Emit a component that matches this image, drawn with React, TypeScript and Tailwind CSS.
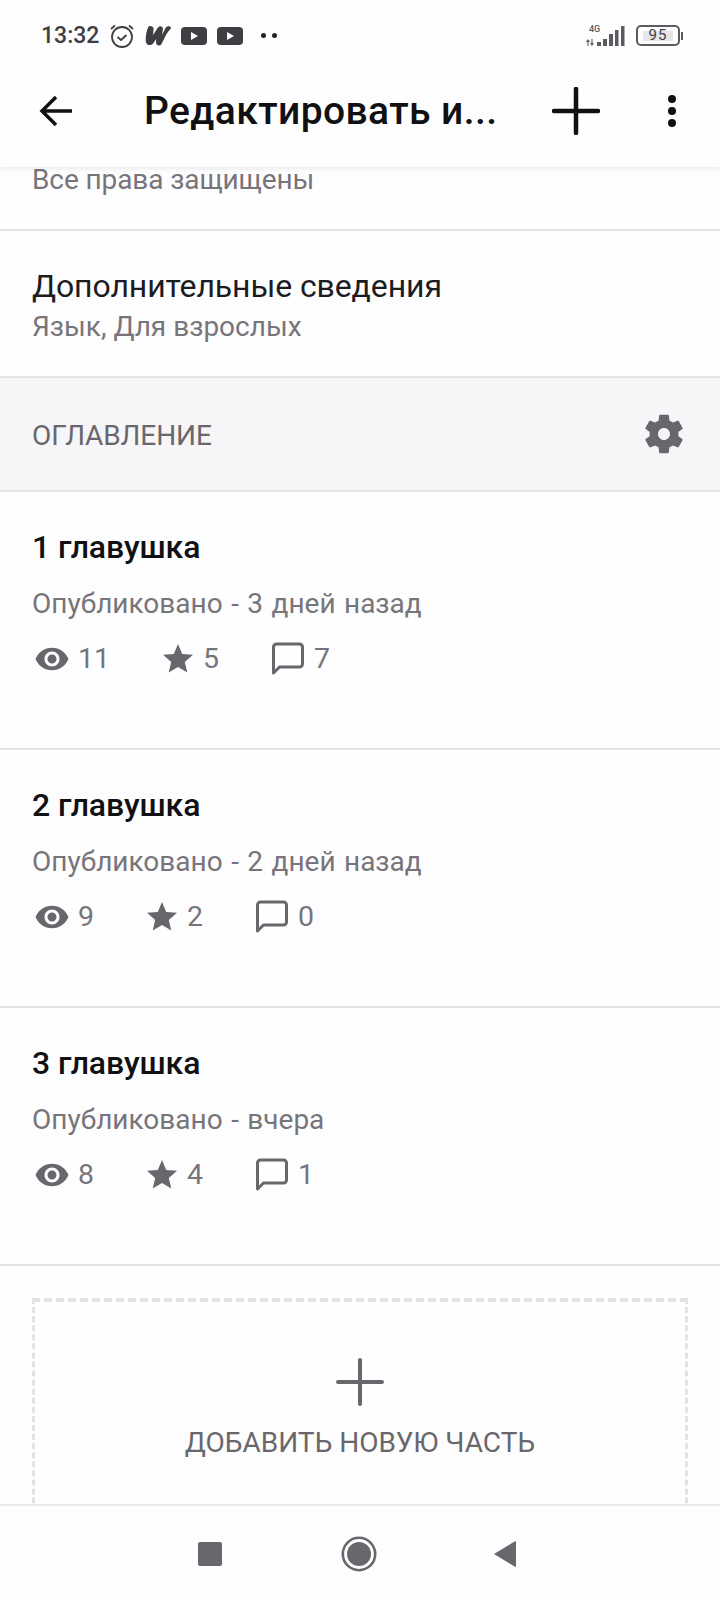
import React from "react";

const GRAY = "#69676b";

function Eye() {
  return (
    <svg width="36" height="36" viewBox="0 0 24 24" fill={GRAY} className="ml-[2px] shrink-0">
      <path d="M12 4.500C7 4.500 2.730 7.610 1 12c1.730 4.390 6 7.500 11 7.500s9.270-3.110 11-7.500c-1.730-4.390-6-7.500-11-7.500zM12 17c-2.760 0-5-2.240-5-5s2.240-5 5-5 5 2.240 5 5-2.240 5-5 5zm0-8c-1.660 0-3 1.340-3 3s1.340 3 3 3 3-1.340 3-3-1.340-3-3-3z" />
    </svg>
  );
}

function Star() {
  return (
    <svg width="36" height="36" viewBox="0 0 24 24" fill={GRAY} className="shrink-0">
      <path d="M12 17.270L18.180 21l-1.640-7.030L22 9.240l-7.190-.61L12 2 9.190 8.630 2 9.240l5.460 4.730L5.820 21z" />
    </svg>
  );
}

function Bubble() {
  return (
    <svg width="34" height="34" viewBox="0 0 34 34" fill="none" stroke={GRAY} strokeWidth="3" strokeLinejoin="round" className="shrink-0">
      <path d="M2.500 31V5a3 3 0 0 1 3-3h23a3 3 0 0 1 3 3v17a3 3 0 0 1-3 3H8.500z" />
    </svg>
  );
}

function Stat({ icon, value, className }: { icon: React.ReactNode; value: string; className: string }) {
  return (
    <div className={`flex items-center ${className}`}>
      {icon}
      <span className="text-[28.500px] leading-none text-[#77757a]">{value}</span>
    </div>
  );
}

function Chapter({ title, date, views, stars, comments, wide }: { title: string; date: string; views: string; stars: string; comments: string; wide?: boolean }) {
  return (
    <section className="h-[258px] border-b-2 border-[#e3e2e5] pl-[32px] pt-[37px]">
      <h3 className="text-[32px] leading-[36px] font-medium tracking-[-0.1px] text-[#111113]">{title}</h3>
      <p className="mt-[21px] text-[28px] leading-[36px] [word-spacing:1.500px] text-[#77757a]">{date}</p>
      <div className="mt-[19px] flex items-center">
        <Stat icon={<Eye />} value={views} className={wide ? "w-[128px] gap-[8px]" : "w-[112px] gap-[8px]"} />
        <Stat icon={<Star />} value={stars} className="w-[111px] gap-[7px]" />
        <Stat icon={<Bubble />} value={comments} className="w-[100px] gap-[9px]" />
      </div>
    </section>
  );
}

function StatusBar() {
  return (
    <div className="flex h-[67px] items-center pt-[4px] pl-[41px] pr-[37px] text-[#3f3e42]">
      <span className="text-[23px] font-medium leading-none">13:32</span>
      <svg width="26" height="26" viewBox="0 0 26 26" fill="none" stroke="#3f3e42" strokeWidth="1.800" className="ml-[10px]">
        <circle cx="13" cy="14" r="10" />
        <path d="M8.500 14l3.500 3 5.500-5M2 6l4-3.500M24 6l-4-3.500" />
      </svg>
      <svg width="26" height="20" viewBox="0 0 26 20" fill="#3f3e42" className="ml-[10px]">
        <path d="M5 0c3 0 4 2 3.500 4L8 9l5-7.500C14.500-.5 18 0 18 3l-1 6 3.500-7C21.500 0 24 0 25 .5c1.500 1 1 2.500-.5 3.500-3 3-5.500 9-8 14-1.500 2.500-5.500 2-5.500-1.500l.2-3.500-2.700 4C6.500 20 1.500 20 .8 15.500.3 12 1.500 5 3 1.500 3.500.5 4 0 5 0z" />
      </svg>
      {[0, 1].map((i) => (
        <svg key={i} width="26" height="18" viewBox="0 0 26 18" className={i === 0 ? "ml-[10px]" : "ml-[10px]"}>
          <rect width="26" height="18" rx="4" fill="#3f3e42" />
          <path d="M10 5l7 4-7 4z" fill="#fff" />
        </svg>
      ))}
      <span className="ml-[18px] h-[5px] w-[5px] rounded-full bg-[#222]" />
      <span className="ml-[6px] h-[5px] w-[5px] rounded-full bg-[#222]" />
      <div className="ml-auto flex items-center gap-[11px]">
        <svg width="39" height="23" viewBox="0 0 39 23" fill="#5c5b5f">
          <text x="3" y="8" fontSize="9" fontWeight="500" fontFamily="Roboto, sans-serif">4G</text>
          <path d="M2 22v-6M0.500 18l1.500-2 1.500 2M6 15v6M4.500 19l1.500 2 1.500-2" stroke="#5c5b5f" strokeWidth="1.100" fill="none" />
          <rect x="11" y="18" width="4" height="4" />
          <rect x="17" y="15" width="4" height="7" />
          <rect x="23" y="10" width="4" height="12" />
          <rect x="29" y="6" width="3.500" height="16" />
          <rect x="35" y="2" width="3.500" height="20" />
        </svg>
        <div className="flex items-center">
          <div className="flex h-[21px] w-[44px] items-center justify-center rounded-[5px] border-2 border-[#5c5b5f]">
            <span className="flex h-[10px] w-[30px] items-center justify-center bg-[#e6e5e8] text-[15px] leading-none tracking-[1px] text-[#3f3e42]">95</span>
          </div>
          <span className="ml-[1px] h-[8px] w-[2px] bg-[#5c5b5f]" />
        </div>
      </div>
    </div>
  );
}

function Toolbar() {
  return (
    <div className="flex h-[100px] items-center pb-[12px]">
      <svg width="34" height="32" viewBox="0 0 34 32" fill="none" stroke="#111113" strokeWidth="3.500" className="ml-[39px]">
        <path d="M33 16H3M17 2L3 16l14 14" />
      </svg>
      <h1 className="ml-[71px] w-[356px] text-[39px] font-medium leading-none tracking-[0.4px] whitespace-nowrap text-[#111113]">Редактировать и...</h1>
      <svg width="48" height="48" viewBox="0 0 48 48" stroke="#111113" strokeWidth="4.500" strokeLinecap="round" className="ml-[52px]">
        <path d="M24 2v44M2 24h44" />
      </svg>
      <div className="ml-[68px] flex flex-col gap-[4px]">
        <span className="h-[8px] w-[8px] rounded-full bg-[#111113]" />
        <span className="h-[8px] w-[8px] rounded-full bg-[#111113]" />
        <span className="h-[8px] w-[8px] rounded-full bg-[#111113]" />
      </div>
    </div>
  );
}

export default function App() {
  return (
    <div className="flex h-[1600px] w-[720px] flex-col overflow-hidden bg-[#fefdff] font-['Roboto',sans-serif]">
      <header className="relative z-10 shrink-0 bg-[#fefdff] shadow-[0_2px_5px_rgba(0,0,0,0.08)]">
        <StatusBar />
        <Toolbar />
      </header>

      <main className="min-h-0 flex-1 overflow-hidden">
        {/* first row is scrolled partly under the toolbar */}
        <div className="h-[64px] border-b-2 border-[#e3e2e5] pl-[32px]">
          <span className="block text-[28px] leading-[26px] tracking-[-0.1px] text-[#77757a]">Все права защищены</span>
        </div>

        <div className="h-[147px] border-b-2 border-[#e3e2e5] pl-[32px] pt-[35px]">
          <p className="text-[32px] leading-[40px] tracking-[-0.1px] text-[#1c1c1f]">Дополнительные сведения</p>
          <p className="text-[28px] leading-[42px] text-[#77757a]">Язык, Для взрослых</p>
        </div>

        <div className="flex h-[114px] items-center justify-between border-b-2 border-[#e3e2e5] bg-[#f6f5f8] pl-[32px] pr-[32px]">
          <span className="mt-[4px] text-[28px] tracking-[-0.1px] text-[#69676b]">ОГЛАВЛЕНИЕ</span>
          <svg width="48" height="48" viewBox="0 0 24 24" fill={GRAY}>
            <path d="M19.140 12.940c.04-.3.06-.61.06-.94 0-.32-.02-.64-.07-.94l2.030-1.580a.49.49 0 0 0 .12-.61l-1.920-3.320a.488.488 0 0 0-.59-.22l-2.390.96c-.5-.38-1.030-.7-1.620-.94l-.36-2.540a.484.484 0 0 0-.48-.41h-3.840c-.24 0-.43.17-.47.41l-.36 2.540c-.59.24-1.130.57-1.620.94l-2.390-.96c-.22-.08-.47 0-.59.22L2.740 8.870c-.12.21-.08.47.12.61l2.030 1.580c-.05.3-.09.63-.09.94s.02.64.07.94l-2.030 1.580a.49.49 0 0 0-.12.61l1.920 3.320c.12.22.37.29.59.22l2.390-.96c.5.38 1.030.7 1.620.94l.36 2.540c.05.24.24.41.48.41h3.840c.24 0 .44-.17.47-.41l.36-2.540c.59-.24 1.130-.56 1.620-.94l2.390.96c.22.08.47 0 .59-.22l1.920-3.320c.12-.22.07-.47-.12-.61l-2.010-1.580zM12 15c-1.650 0-3-1.350-3-3s1.350-3 3-3 3 1.350 3 3-1.350 3-3 3z" />
          </svg>
        </div>

        <Chapter title="1 главушка" date="Опубликовано - 3 дней назад" views="11" stars="5" comments="7" wide />
        <Chapter title="2 главушка" date="Опубликовано - 2 дней назад" views="9" stars="2" comments="0" />
        <Chapter title="3 главушка" date="Опубликовано - вчера" views="8" stars="4" comments="1" />

        <div className="px-[32px] pt-[32px]">
          <div className="flex h-[260px] flex-col items-center border-x-[3px] border-t-4 border-dashed border-[#e3e2e5] pt-[56px]">
            <svg width="48" height="48" viewBox="0 0 48 48" stroke={GRAY} strokeWidth="4" strokeLinecap="round">
              <path d="M24 2v44M2 24h44" />
            </svg>
            <span className="mt-[19px] text-[28px] leading-[36px] text-[#69676b]">ДОБАВИТЬ НОВУЮ ЧАСТЬ</span>
          </div>
        </div>
      </main>

      <nav className="relative z-10 flex h-[96px] shrink-0 items-center border-t-2 border-[#e9e8eb] bg-[#fefdff] pl-[198px] pt-[2px]">
        <span className="h-[24px] w-[24px] rounded-[2px] bg-[#69676b]" />
        <svg width="36" height="36" viewBox="0 0 36 36" className="ml-[119px]">
          <circle cx="18" cy="18" r="16.200" fill="none" stroke={GRAY} strokeWidth="2.600" />
          <circle cx="18" cy="18" r="12" fill={GRAY} />
        </svg>
        <svg width="24" height="26" viewBox="0 0 24 26" className="ml-[116px]" fill={GRAY}>
          <path d="M23 1v24a1 1 0 0 1-1.500.6L1 13 21.500.4A1 1 0 0 1 23 1z" />
        </svg>
      </nav>
    </div>
  );
}
